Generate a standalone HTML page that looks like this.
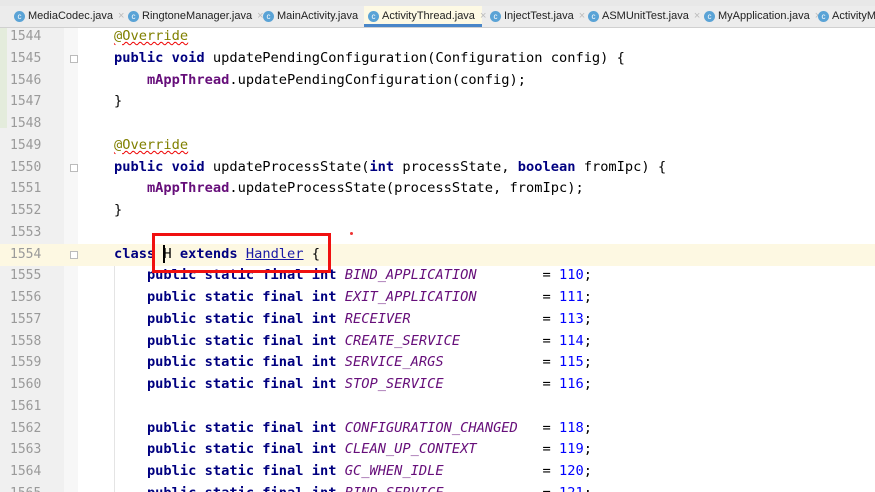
<!DOCTYPE html>
<html><head><meta charset="utf-8"><style>
*{margin:0;padding:0;box-sizing:border-box}
html,body{width:875px;height:492px;overflow:hidden}
body{background:#fff;position:relative;font-family:"Liberation Sans",sans-serif}
.top{position:absolute;left:0;top:0;width:875px;height:6px;background:#e8e8e8}
.tabs{position:absolute;left:0;top:6px;width:875px;height:22px;background:#ececec;border-bottom:1px solid #d0d0d0;font-size:11px;color:#222;white-space:nowrap;overflow:hidden}
.tab{position:absolute;top:0;height:21px;line-height:21px;padding-left:18px}
.tab .ic{position:absolute;left:4px;top:5px;width:11px;height:11px;border-radius:50%;background:#5aa3d6;color:#fff;font-size:8px;line-height:11px;text-align:center}
.tab .x{color:#bbb;margin-left:5px}
.tab.act{background:#fdf9e4;border-bottom:3px solid #4a86c8}
.gut{position:absolute;left:0;top:28px;width:64px;height:464px;background:#f0f0f0}
.gut2{position:absolute;left:64px;top:28px;width:14px;height:464px;background:#f7f7f7}
.strip{position:absolute;left:0;top:28px;width:7px;height:100px;background:#e4ecdc}
.hl{position:absolute;left:0;top:244px;width:875px;height:22px;background:#fdf8e2}
.ln{position:absolute;left:10px;width:40px;font-family:"DejaVu Sans Mono",monospace;font-size:13px;color:#9a9a9a;height:21.75px;line-height:21.75px}
.code{position:absolute;left:81px;font-family:"DejaVu Sans Mono",monospace;font-size:13.7px;white-space:pre;height:21.75px;line-height:21.75px;color:#000}
.k{color:#000080;font-weight:bold}
.a{color:#808000;text-decoration:underline wavy #e00;text-decoration-thickness:1px}
.f{color:#660e7a;font-weight:bold}
.c{color:#660e7a;font-style:italic}
.n{color:#0000ff}
.u{color:#1a1aa6;text-decoration:underline}
.box{position:absolute;left:152px;top:233px;width:179px;height:40px;border:3.5px solid #f01010}
.dot{position:absolute;left:350px;top:232px;width:3px;height:3px;background:#e33;border-radius:50%}
.vl{position:absolute;left:114px;top:266px;width:1px;height:226px;background:#e4e4e4}
.fold{position:absolute;left:70px;width:8px;height:8px;border:1px solid #bbb;background:#fff}
.cur{position:absolute;left:163px;top:245px;width:2px;height:18px;background:#000}
</style></head><body>
<div class="top"></div>
<div class="tabs">
<div class="tab" style="left:10px"><span class="ic">c</span>MediaCodec.java<span class="x">×</span></div>
<div class="tab" style="left:124px"><span class="ic">c</span>RingtoneManager.java<span class="x">×</span></div>
<div class="tab" style="left:259px"><span class="ic">c</span>MainActivity.java<span class="x">×</span></div>
<div class="tab act" style="left:364px;width:118px"><span class="ic">c</span>ActivityThread.java<span class="x">×</span></div>
<div class="tab" style="left:486px"><span class="ic">c</span>InjectTest.java<span class="x">×</span></div>
<div class="tab" style="left:584px"><span class="ic">c</span>ASMUnitTest.java<span class="x">×</span></div>
<div class="tab" style="left:700px"><span class="ic">c</span>MyApplication.java<span class="x">×</span></div>
<div class="tab" style="left:814px"><span class="ic">c</span>ActivityManager.java</div>
</div>
<div class="gut"></div><div class="gut2"></div><div class="strip"></div>
<div class="hl"></div>
<div class="vl"></div>
<div class="fold" style="top:55px"></div>
<div class="fold" style="top:164px"></div>
<div class="fold" style="top:251px"></div>

<div class="ln" style="top:26px">1544</div>
<div class="ln" style="top:47.75px">1545</div>
<div class="ln" style="top:69.5px">1546</div>
<div class="ln" style="top:91.25px">1547</div>
<div class="ln" style="top:113px">1548</div>
<div class="ln" style="top:134.75px">1549</div>
<div class="ln" style="top:156.5px">1550</div>
<div class="ln" style="top:178.25px">1551</div>
<div class="ln" style="top:200px">1552</div>
<div class="ln" style="top:221.75px">1553</div>
<div class="ln" style="top:243.5px">1554</div>
<div class="ln" style="top:265.25px">1555</div>
<div class="ln" style="top:287px">1556</div>
<div class="ln" style="top:308.75px">1557</div>
<div class="ln" style="top:330.5px">1558</div>
<div class="ln" style="top:352.25px">1559</div>
<div class="ln" style="top:374px">1560</div>
<div class="ln" style="top:395.75px">1561</div>
<div class="ln" style="top:417.5px">1562</div>
<div class="ln" style="top:439.25px">1563</div>
<div class="ln" style="top:461px">1564</div>
<div class="ln" style="top:482.75px">1565</div>

<div class="code" style="top:26px">    <span class="a">@Override</span></div>
<div class="code" style="top:47.75px">    <span class="k">public void</span> updatePendingConfiguration(Configuration config) {</div>
<div class="code" style="top:69.5px">        <span class="f">mAppThread</span>.updatePendingConfiguration(config);</div>
<div class="code" style="top:91.25px">    }</div>
<div class="code" style="top:134.75px">    <span class="a">@Override</span></div>
<div class="code" style="top:156.5px">    <span class="k">public void</span> updateProcessState(<span class="k">int</span> processState, <span class="k">boolean</span> fromIpc) {</div>
<div class="code" style="top:178.25px">        <span class="f">mAppThread</span>.updateProcessState(processState, fromIpc);</div>
<div class="code" style="top:200px">    }</div>
<div class="code" style="top:243.5px">    <span class="k">class</span> H <span class="k">extends</span> <span class="u">Handler</span> {</div>
<div class="code" style="top:265.25px">        <span class="k">public static final int</span> <span class="c">BIND_APPLICATION</span>        = <span class="n">110</span>;</div>
<div class="code" style="top:287px">        <span class="k">public static final int</span> <span class="c">EXIT_APPLICATION</span>        = <span class="n">111</span>;</div>
<div class="code" style="top:308.75px">        <span class="k">public static final int</span> <span class="c">RECEIVER</span>                = <span class="n">113</span>;</div>
<div class="code" style="top:330.5px">        <span class="k">public static final int</span> <span class="c">CREATE_SERVICE</span>          = <span class="n">114</span>;</div>
<div class="code" style="top:352.25px">        <span class="k">public static final int</span> <span class="c">SERVICE_ARGS</span>            = <span class="n">115</span>;</div>
<div class="code" style="top:374px">        <span class="k">public static final int</span> <span class="c">STOP_SERVICE</span>            = <span class="n">116</span>;</div>
<div class="code" style="top:417.5px">        <span class="k">public static final int</span> <span class="c">CONFIGURATION_CHANGED</span>   = <span class="n">118</span>;</div>
<div class="code" style="top:439.25px">        <span class="k">public static final int</span> <span class="c">CLEAN_UP_CONTEXT</span>        = <span class="n">119</span>;</div>
<div class="code" style="top:461px">        <span class="k">public static final int</span> <span class="c">GC_WHEN_IDLE</span>            = <span class="n">120</span>;</div>
<div class="code" style="top:482.75px">        <span class="k">public static final int</span> <span class="c">BIND_SERVICE</span>            = <span class="n">121</span>;</div>
<div class="cur"></div>
<div class="box"></div>
<div class="dot"></div>
</body></html>
